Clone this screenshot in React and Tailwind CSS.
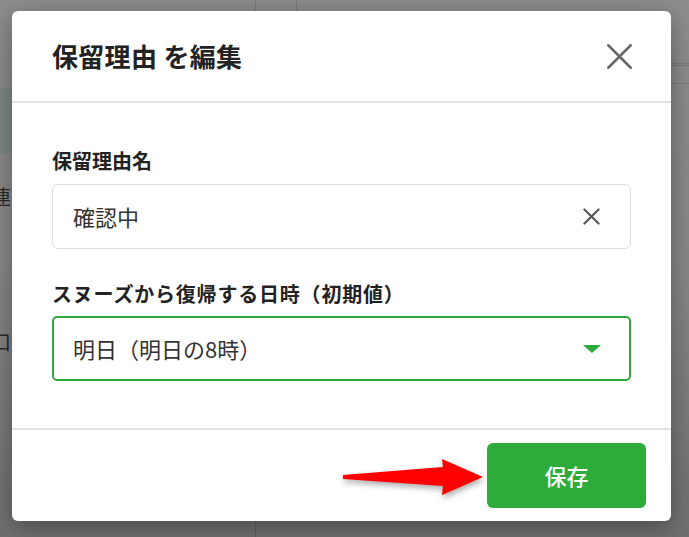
import { useState } from 'react';

const font = { fontFamily: '"Noto Sans CJK JP", "Noto Sans", sans-serif' };

function CloseIcon({ className }) {
  return (
    <svg viewBox="0 0 24 24" className={className} fill="none" stroke="currentColor" strokeLinecap="round">
      <path d="M2 2 L22 22 M22 2 L2 22" />
    </svg>
  );
}

export default function App() {
  const [name, setName] = useState('確認中');

  return (
    <div
      className="relative w-[689px] h-[537px] overflow-hidden bg-gradient-to-b from-[#8d8d8d] via-[#878787] to-[#6f6f6f]"
      style={font}
    >
      {/* backdrop page bits */}
      <div className="absolute left-0 top-[88px] w-[14px] h-[66px] bg-[#7b8783]" />
      <div className="absolute left-[-9px] top-[182px] text-[20px] text-[#2a2a2a]">連</div>
      <div className="absolute left-[-9px] top-[327px] text-[20px] text-[#2a2a2a]">口</div>
      <div className="absolute left-[255px] top-0 w-px h-[12px] bg-[#7a7a7a]" />
      <div className="absolute left-[296px] top-0 w-px h-[12px] bg-[#7a7a7a]" />
      <div className="absolute left-[255px] top-[520px] w-px h-[17px] bg-[#5f5f5f]" />
      <div className="absolute right-0 top-[63px] w-[20px] h-[3px] border-y border-[#7a7a7a]" />
      <div className="absolute right-0 top-[83px] w-[20px] h-px bg-[#7a7a7a]" />

      {/* modal */}
      <div className="relative pl-[12px] pt-[11px]">
        <div className="w-[659px] h-[510px] bg-white rounded-[6px] shadow-[0_6px_24px_rgba(0,0,0,0.35)] flex flex-col">
          <div className="h-[92px] flex items-center justify-between pl-[40px] pr-[38px] border-b-2 border-[#e3e3e3]">
            <h2 className="text-[26px] font-bold text-[#222] leading-none tracking-[0.3px]">保留理由 を編集</h2>
            <CloseIcon className="w-[27px] h-[27px] text-[#666] stroke-[2.2]" />
          </div>

          <div className="flex-1 px-[40px] pt-[48px]">
            <label className="block text-[20px] font-bold text-[#222] leading-none">保留理由名</label>
            <div className="mt-[13px] h-[65px] border border-[#dedede] rounded-[6px] flex items-center justify-between pl-[20px] pr-[30px]">
              <input
                value={name}
                onChange={(e) => setName(e.target.value)}
                className="flex-1 outline-none text-[22px] text-[#333] bg-transparent"
              />
              <CloseIcon className="w-[17px] h-[17px] text-[#555] stroke-[3]" />
            </div>

            <label className="block mt-[35px] text-[20px] font-bold text-[#222] leading-none tracking-[0.8px]">
              スヌーズから復帰する日時（初期値）
            </label>
            <div className="mt-[12px] h-[65px] border-2 border-[#2eaa3c] rounded-[5px] flex items-center justify-between pl-[19px] pr-[28px]">
              <span className="text-[22px] text-[#333]">明日（明日の8時）</span>
              <svg viewBox="0 0 18 8" className="w-[18px] h-[8px]">
                <polygon points="0,0 18,0 9,8" fill="#2eaa3c" />
              </svg>
            </div>
          </div>

          <div className="h-[93px] border-t-2 border-[#e3e3e3] flex items-center justify-end pr-[25px]">
            <button className="w-[159px] h-[65px] rounded-[6px] bg-[#2dab3b] text-white text-[22px] font-medium">
              保存
            </button>
          </div>
        </div>
      </div>

      {/* annotation arrow */}
      <svg
        className="absolute left-0 top-0 w-[689px] h-[537px] pointer-events-none"
        viewBox="0 0 689 537"
        style={{ filter: 'drop-shadow(1px 3px 3px rgba(0,0,0,0.35))' }}
      >
        <polygon points="343,475 443,467 442,459 483,477 442,495 443,486 343,479" fill="#ff0000" />
      </svg>
    </div>
  );
}
